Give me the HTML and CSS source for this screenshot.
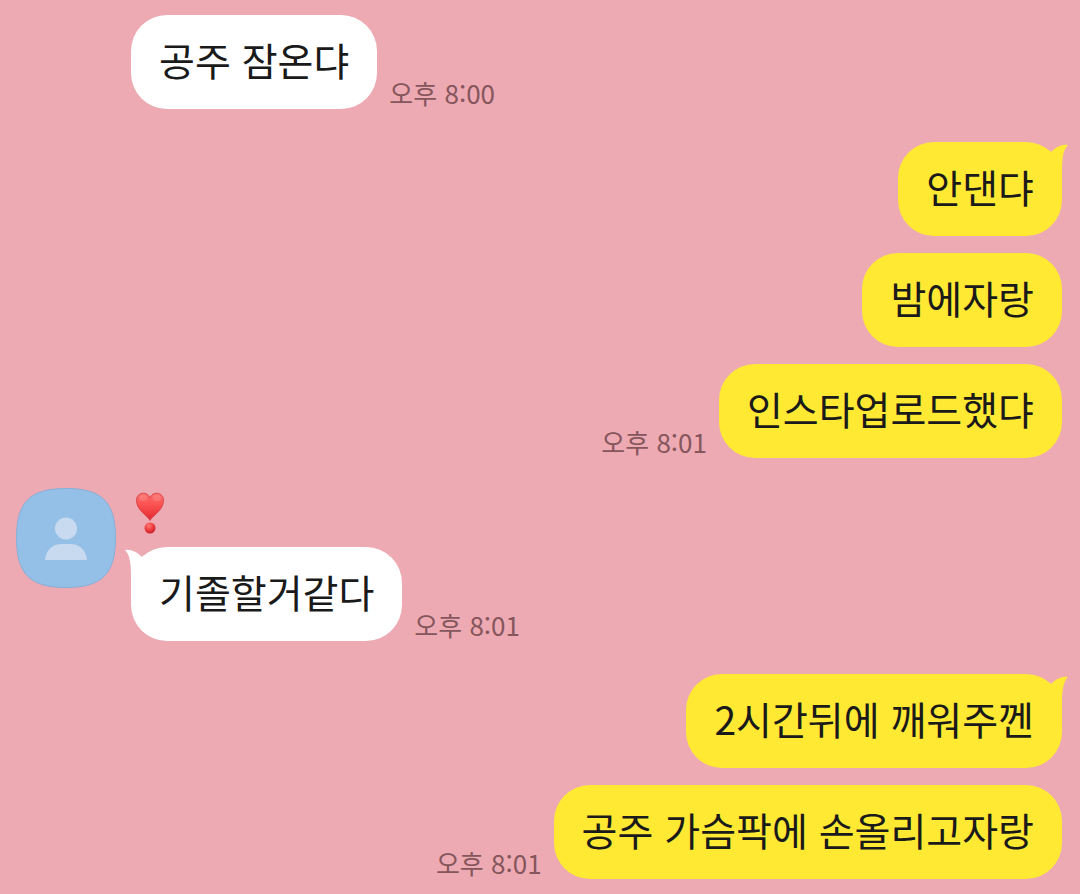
FILE: index.html
```html
<!DOCTYPE html>
<html lang="ko">

<head>
  <meta charset="UTF-8">
  <meta name="viewport" content="width=device-width, initial-scale=1.0">
  <title>채팅방</title>
  <link rel="stylesheet" href="styles.css">
</head>

<body>
  <main class="chat">
    <!-- 받은 메시지 -->
    <section class="group received">
      <div class="messages">
        <div class="message">
          <p class="bubble">공주 잠온댜</p>
          <time class="time" datetime="20:00">오후 8:00</time>
        </div>
      </div>
    </section>

    <!-- 보낸 메시지 -->
    <section class="group sent">
      <div class="messages">
        <div class="message">
          <p class="bubble">안댄댜
            <svg class="tail" viewBox="0 0 24 36" aria-hidden="true"><path d="M24 3C19 8 18 17 18 30V36L5 22V8L7 10C12 5 18 2 24 3Z"/></svg>
          </p>
        </div>
        <div class="message">
          <p class="bubble">밤에자랑</p>
        </div>
        <div class="message">
          <p class="bubble">인스타업로드했댜</p>
          <time class="time" datetime="20:01">오후 8:01</time>
        </div>
      </div>
    </section>

    <!-- 프로필이 있는 받은 메시지 -->
    <section class="group received">
      <svg class="avatar" viewBox="0 0 100 100" role="img" aria-label="프로필">
        <path class="avatar-bg" d="M50 .5C86 .5 99.500 14 99.500 50S86 99.500 50 99.500.500 86 .5 50 14 .5 50 .5Z"/>
        <circle class="avatar-person" cx="50" cy="40.500" r="11"/>
        <path class="avatar-person" d="M29 72C30 62 36 56 46 56H54C64 56 70 62 71 72Z"/>
      </svg>
      <div class="messages">
        <div class="name">
          <svg class="heart" viewBox="0 0 30 42" role="img" aria-label="하트 느낌표">
            <defs>
              <linearGradient id="heart-fill" x1="0" y1="0" x2="0" y2="1">
                <stop offset="0" stop-color="#f9726f"/>
                <stop offset=".45" stop-color="#fb4f50"/>
                <stop offset="1" stop-color="#e02a32"/>
              </linearGradient>
              <radialGradient id="dot-fill" cx=".4" cy=".3" r=".7">
                <stop offset="0" stop-color="#ff7c72"/>
                <stop offset=".6" stop-color="#ee393c"/>
                <stop offset="1" stop-color="#c5232c"/>
              </radialGradient>
            </defs>
            <path d="M15 28.500C13 24 1.500 18.500 1.500 8.500C1.500 -.5 13 -1 15 6C17 -1 28.500 -.5 28.500 8.500C28.500 18.500 17 24 15 28.500Z" fill="url(#heart-fill)" stroke="#d43a3f" stroke-width=".8"/>
            <ellipse cx="8" cy="6" rx="4" ry="3" fill="#ff9b94" opacity=".35"/>
            <ellipse cx="22" cy="6" rx="4" ry="3" fill="#ff9b94" opacity=".35"/>
            <circle cx="15" cy="36" r="5.500" fill="url(#dot-fill)"/>
          </svg>
        </div>
        <div class="message">
          <p class="bubble">기졸할거같다
            <svg class="tail" viewBox="0 0 24 36" aria-hidden="true"><path d="M24 3C19 8 18 17 18 30V36L5 22V8L7 10C12 5 18 2 24 3Z"/></svg>
          </p>
          <time class="time" datetime="20:01">오후 8:01</time>
        </div>
      </div>
    </section>

    <!-- 보낸 메시지 -->
    <section class="group sent">
      <div class="messages">
        <div class="message">
          <p class="bubble">2시간뒤에 깨워주껜
            <svg class="tail" viewBox="0 0 24 36" aria-hidden="true"><path d="M24 3C19 8 18 17 18 30V36L5 22V8L7 10C12 5 18 2 24 3Z"/></svg>
          </p>
        </div>
        <div class="message">
          <p class="bubble">공주 가슴팍에 손올리고자랑</p>
          <time class="time" datetime="20:01">오후 8:01</time>
        </div>
      </div>
    </section>
  </main>
</body>

</html>
```

FILE: styles.css
```css
/* 전체 */
* {
  box-sizing: border-box;
}

body {
  margin: 0;
  background-color: #eeaab3;
  font-family: "Noto Sans CJK KR", sans-serif;
  color: #1a1a1a;
}

.chat {
  padding: 15px 18px 15px 16px;
}

/* 메시지 묶음 */
.group {
  display: flex;
}

.group + .group {
  margin-top: 33px;
}

.sent {
  justify-content: flex-end;
}

.sent + .received {
  margin-top: 30px;
}

.messages {
  display: flex;
  flex-direction: column;
  gap: 17px;
}

.received .messages {
  margin-left: 115px;
  gap: 0;
}

.received .avatar + .messages {
  margin-left: 15px;
}

/* 메시지 한 줄 */
.message {
  display: flex;
  align-items: flex-end;
  gap: 12px;
}

.sent .message {
  flex-direction: row-reverse;
}

/* 말풍선 */
.bubble {
  position: relative;
  margin: 0;
  padding: 15px 28px 21px;
  border-radius: 36px;
  font-size: 39px;
  line-height: 58px;
}

.received .bubble {
  background-color: #fff;
}

.sent .bubble {
  background-color: #ffe933;
}

/* 말풍선 꼬리 */
.tail {
  position: absolute;
  top: 0;
  width: 24px;
  height: 36px;
}

.sent .tail {
  right: -6px;
  fill: #ffe933;
}

.received .tail {
  left: -6px;
  fill: #fff;
  transform: scaleX(-1);
}

.time {
  flex-shrink: 0;
  font-size: 26px;
  line-height: 32px;
  color: #85565c;
}

/* 프로필 */
.avatar {
  flex-shrink: 0;
  width: 100px;
  height: 100px;
}

.avatar-bg {
  fill: #94bfe6;
  stroke: #86b0d9;
}

.avatar-person {
  fill: #c7daf0;
}

.name {
  height: 59px;
  padding: 4px;
}

.heart {
  display: block;
  width: 30px;
  height: 42px;
}
```
